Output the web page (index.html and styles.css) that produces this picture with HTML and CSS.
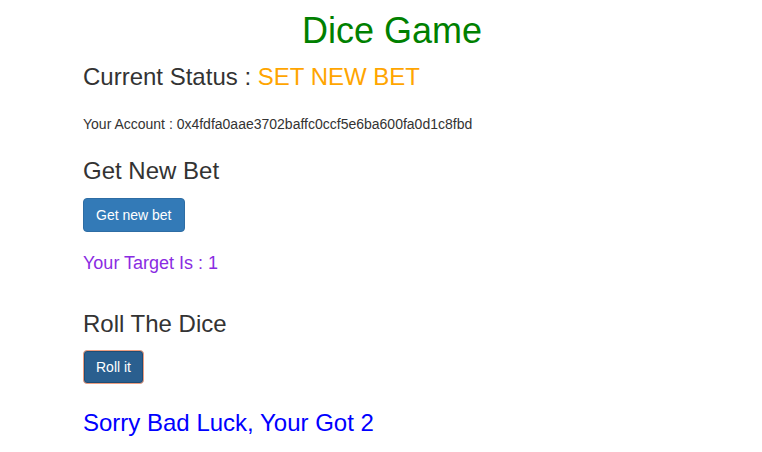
FILE: index.html
```html
<!DOCTYPE html>
<html>
<head>
<meta charset="utf-8">
<link rel="stylesheet" href="styles.css">
</head>
<body>
<div class="container">
  <h1 class="title">Dice Game</h1>
  <h3 class="status">Current Status : <span class="status-value">SET NEW BET</span></h3>
  <p class="account">Your Account : 0x4fdfa0aae3702baffc0ccf5e6ba600fa0d1c8fbd</p>
  <h3 class="section-bet">Get New Bet</h3>
  <button class="btn btn-primary btn-bet">Get new bet</button>
  <h4 class="target">Your Target Is : 1</h4>
  <h3 class="section-roll">Roll The Dice</h3>
  <button class="btn btn-primary btn-roll">Roll it</button>
  <h3 class="result">Sorry Bad Luck, Your Got 2</h3>
</div>
</body>
</html>
```
FILE: styles.css
```css
html, body {
  margin: 0;
  padding: 0;
  background: #fff;
}
body {
  font-family: "Liberation Sans", Arial, sans-serif;
  font-size: 14px;
  line-height: 1.42857;
  color: #333;
}
.container {
  display: flex;
  flex-direction: column;
  align-items: flex-start;
  padding: 0 61px 0 83px;
}
h1, h3, h4, p {
  font-weight: 400;
  margin: 0;
  line-height: 1.1;
}
.title {
  align-self: stretch;
  text-align: center;
  font-size: 36px;
  color: #008000;
  margin-top: 11px;
}
.status {
  font-size: 24px;
  margin-top: 13px;
}
.status-value {
  color: #ffa500;
}
.account {
  font-size: 14px;
  line-height: 20px;
  margin-top: 24px;
}
.section-bet {
  font-size: 24px;
  margin-top: 24px;
}
.btn {
  font-family: "Liberation Sans", Arial, sans-serif;
  font-size: 14px;
  line-height: 20px;
  padding: 6px 12px;
  border-radius: 4px;
  color: #fff;
  cursor: pointer;
}
.btn-bet {
  background: #337ab7;
  border: 1px solid #2e6da4;
  margin-top: 14px;
}
.btn-roll {
  background: #2a5f8f;
  border: 1px solid #ee9e80;
  box-shadow: inset 0 0 0 1px #204d74;
  margin-top: 12px;
}
.target {
  font-size: 18px;
  color: #8a2be2;
  margin-top: 22px;
}
.section-roll {
  font-size: 24px;
  margin-top: 37px;
}
.result {
  font-size: 24px;
  color: #0000ff;
  margin-top: 26px;
}
```
